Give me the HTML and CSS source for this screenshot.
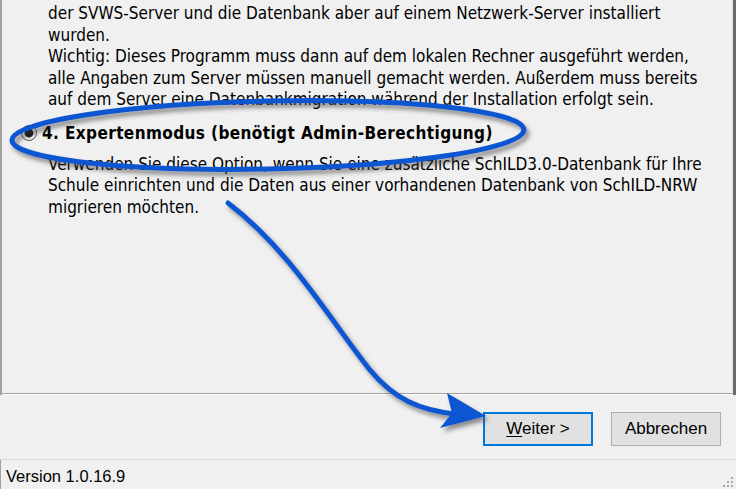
FILE: index.html
```html
<!DOCTYPE html>
<html lang="de">
<head>
<meta charset="utf-8">
<title>SVWS-Server Installation</title>
<link rel="stylesheet" href="styles.css">
</head>
<body>
<div class="window">
  <div class="panel">
    <p class="desc first">der SVWS-Server und die Datenbank aber auf einem Netzwerk-Server installiert<br>wurden.<br>Wichtig: Dieses Programm muss dann auf dem lokalen Rechner ausgeführt werden,<br>alle Angaben zum Server müssen manuell gemacht werden. Außerdem muss bereits<br>auf dem Server eine Datenbankmigration während der Installation erfolgt sein.</p>
    <label class="option">
      <span class="radio checked"></span>
      <span class="option-title">4. Expertenmodus (benötigt Admin-Berechtigung)</span>
    </label>
    <p class="desc">Verwenden Sie diese Option, wenn Sie eine zusätzliche SchILD3.0-Datenbank für Ihre<br>Schule einrichten und die Daten aus einer vorhandenen Datenbank von SchILD-NRW<br>migrieren möchten.</p>
  </div>
  <div class="buttons">
    <button class="btn default"><u>W</u>eiter &gt;</button>
    <button class="btn">Abbrechen</button>
  </div>
  <div class="status">
    <span class="version">Version 1.0.16.9</span>
    <svg class="grip" width="12" height="12" viewBox="0 0 12 12">
      <rect x="9" y="1" width="2" height="2"/>
      <rect x="5" y="5" width="2" height="2"/><rect x="9" y="5" width="2" height="2"/>
      <rect x="1" y="9" width="2" height="2"/><rect x="5" y="9" width="2" height="2"/><rect x="9" y="9" width="2" height="2"/>
    </svg>
  </div>

  <svg class="marker" width="736" height="489" viewBox="0 0 736 489">
    <defs>
      <filter id="shadow" x="-10%" y="-10%" width="120%" height="130%">
        <feGaussianBlur in="SourceAlpha" stdDeviation="2"/>
        <feOffset dx="3" dy="4" result="blur"/>
        <feFlood flood-color="#3c3c3c" flood-opacity="0.55"/>
        <feComposite in2="blur" operator="in"/>
        <feMerge><feMergeNode/><feMergeNode in="SourceGraphic"/></feMerge>
      </filter>
    </defs>
    <g filter="url(#shadow)">
      <ellipse cx="268" cy="135" rx="256" ry="34" transform="rotate(-1.2 268 135)" fill="none" stroke="#0a57d1" stroke-width="5"/>
      <path d="M228 203 C 290 250, 330 320, 370 370 C 395 400, 420 410, 455 414" fill="none" stroke="#0a57d1" stroke-width="5" stroke-linecap="round"/>
      <path d="M447 393 L486 416 L440 428 L452 413 Z" fill="#0a57d1"/>
    </g>
  </svg>
</div>
</body>
</html>
```

FILE: styles.css
```css
* { box-sizing: border-box; }

html, body {
  margin: 0;
  padding: 0;
  background: #f0f0f0;
}

.window {
  position: relative;
  width: 736px;
  height: 489px;
  display: flex;
  flex-direction: column;
  overflow: hidden;
  font-family: "DejaVu Sans Condensed", "Liberation Sans", sans-serif;
  color: #000;
}

/* upper content area with sunken frame */
.panel {
  height: 395px;
  border-left: 2px solid #a0a0a0;
  border-right: 3px solid #6a6a6a;
  box-shadow: inset -1px 0 0 #e3e3e3, inset 0 -1px 0 #ffffff, inset 0 -2px 0 #a0a0a0;
  padding: 3px 0 0 46px;
}

.desc {
  margin: 0;
  font-size: 17px;
  line-height: 21.5px;
  white-space: nowrap;
}

.option {
  display: flex;
  align-items: center;
  gap: 5px;
  height: 22px;
  margin: 11px 0 10px -27px;
}

.radio {
  width: 16px;
  height: 16px;
  border-radius: 50%;
  border: 1px solid #555;
  background: radial-gradient(circle, #111 0 3.5px, #3a3a3a 4px, #f4f4f4 5px, #d4d4d4 100%);
}

.option-title {
  font-weight: bold;
  font-size: 17px;
  letter-spacing: 0.4px;
}

.buttons {
  flex: 1;
  display: flex;
  justify-content: flex-end;
  align-items: flex-start;
  gap: 18px;
  padding: 17px 15px 0 0;
  border-bottom: 1px solid #d9d9d9;
}

.btn {
  width: 110px;
  height: 34px;
  background: #e1e1e1;
  border: 1px solid #adadad;
  font-family: "Liberation Sans", sans-serif;
  font-size: 17px;
  color: #000;
  padding: 0;
}

.btn.default {
  border: 2px solid #0078d7;
}

.btn u { text-decoration-thickness: 1px; text-underline-offset: 2px; }

.status {
  height: 29px;
  display: flex;
  align-items: center;
  justify-content: space-between;
  padding: 3px 2px 0 5px;
  border-left: 1px solid #a0a0a0;
  font-family: "Liberation Sans", sans-serif;
  font-size: 16.5px;
}

/* resize grip dots */
.grip {
  align-self: flex-end;
  margin-bottom: 1px;
  fill: #a8a8a8;
}

.marker {
  position: absolute;
  left: 0;
  top: 0;
  pointer-events: none;
}
```
